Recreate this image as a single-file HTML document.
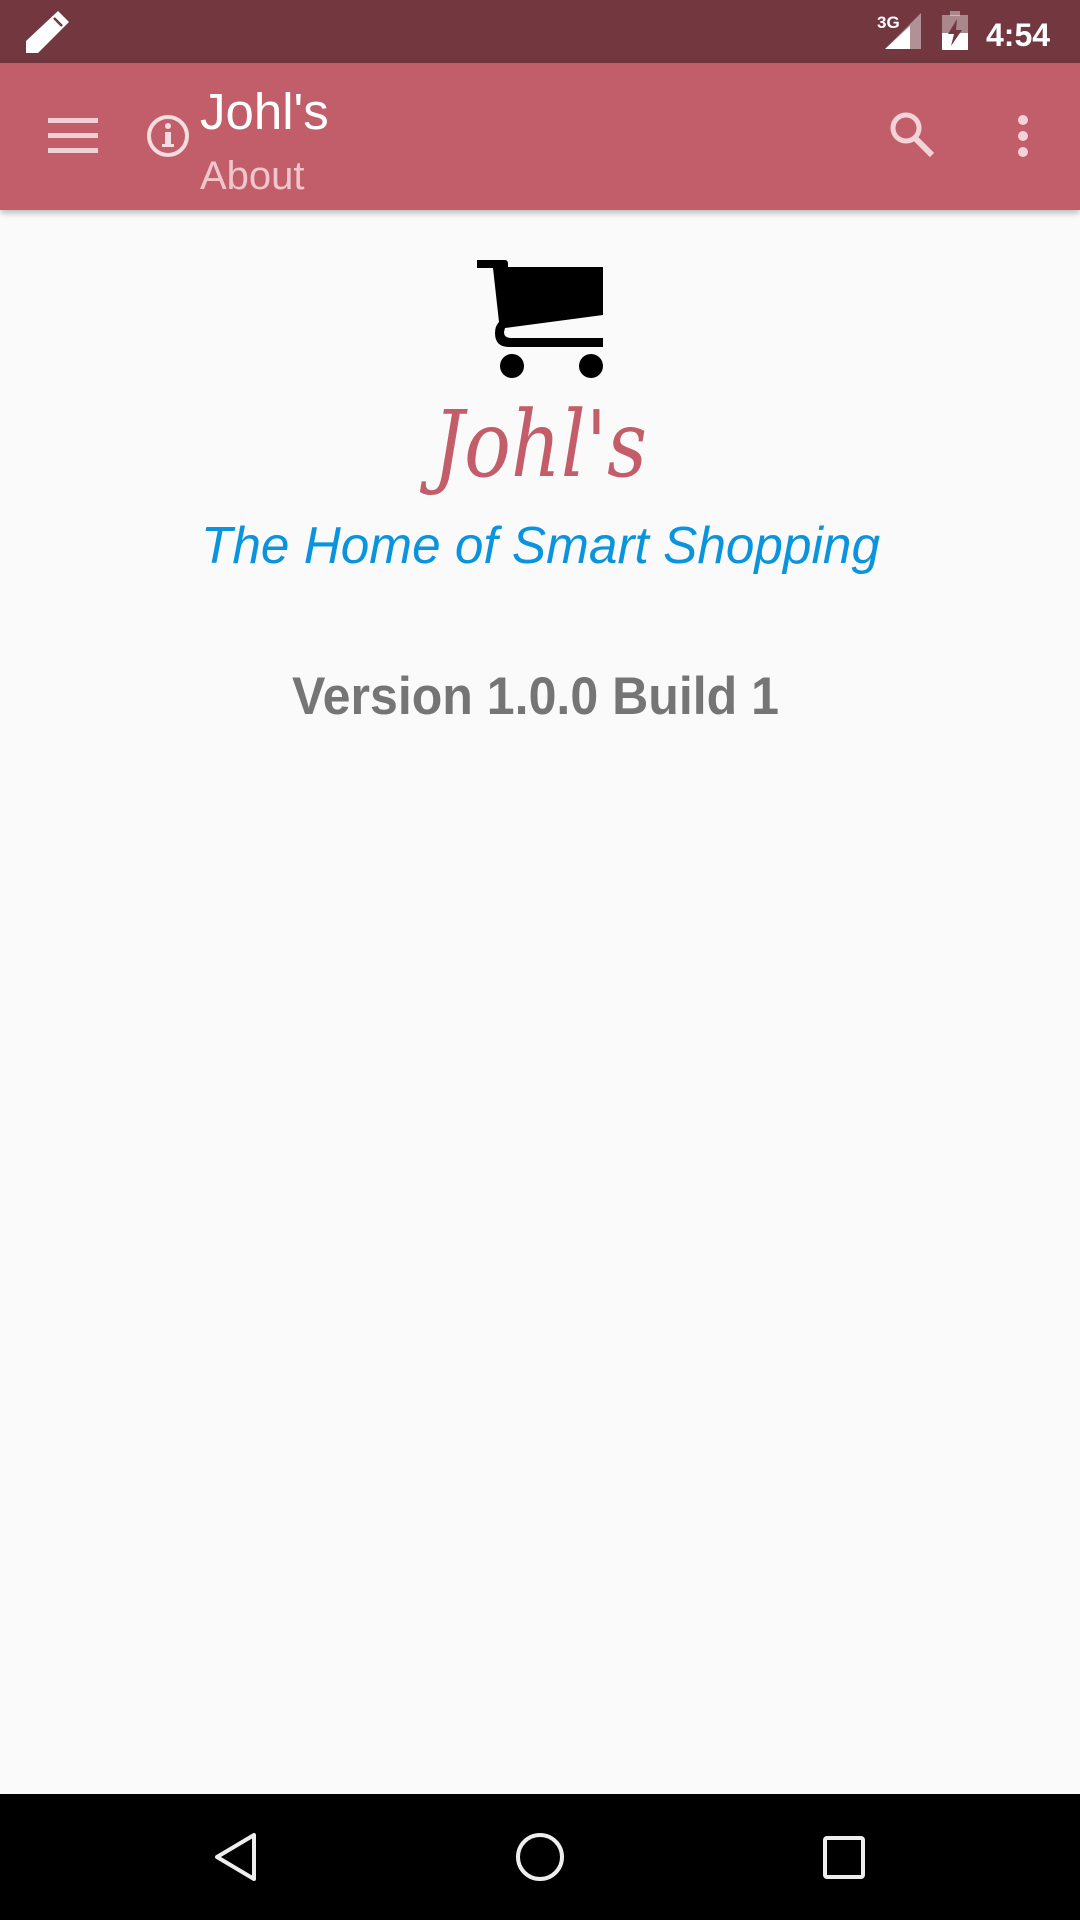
<!DOCTYPE html>
<html><head><meta charset="utf-8"><style>
html,body{margin:0;padding:0;}
body{width:1080px;height:1920px;background:#fafafa;position:relative;overflow:hidden;font-family:"Liberation Sans",sans-serif;}
.abs{position:absolute;}
</style></head><body>
<div class="abs" style="left:0;top:0;width:1080px;height:63px;background:#72373f"></div>
<div class="abs" style="left:0;top:63px;width:1080px;height:147px;background:#c15e6a;box-shadow:0 3px 6px rgba(0,0,0,0.25)"></div>
<div class="abs" style="left:0;top:1794px;width:1080px;height:126px;background:#000"></div>
<svg class="abs" style="left:0;top:0" width="1080" height="1920" viewBox="0 0 1080 1920">
  <!-- pencil -->
  <path d="M58 11 L69 22 L38 53 L26 53 L26 41 Z" fill="#fff"/>
  <path d="M54 18 L62 26" stroke="#72373f" stroke-width="2.5"/>
  <!-- 3G -->
  <text x="877" y="28" fill="#fff" font-family="Liberation Sans" font-weight="bold" font-size="17">3G</text>
  <path d="M921 13 L921 49 L885 49 Z" fill="#fff" opacity="0.45"/>
  <path d="M910 26 L910 49 L885 49 Z" fill="#fff"/>
  <!-- battery -->
  <rect x="942" y="15" width="26" height="35" fill="#fff" opacity="0.4"/>
  <rect x="950" y="11" width="10" height="5" fill="#fff" opacity="0.4"/>
  <rect x="942" y="33" width="26" height="17" fill="#fff"/>
  <path d="M957 19 L948 34 L954 34 L951 46 L962 30 L956 30 Z" fill="#72373f"/>
  <text x="986" y="46" fill="#fff" font-family="Liberation Sans" font-weight="bold" font-size="32">4:54</text>
  <!-- hamburger -->
  <g fill="#f0d0d4"><rect x="48" y="118" width="50" height="5"/><rect x="48" y="133" width="50" height="5"/><rect x="48" y="148" width="50" height="5"/></g>
  <!-- info -->
  <circle cx="168" cy="136" r="19" fill="none" stroke="#f3dde0" stroke-width="4"/>
  <circle cx="168" cy="126" r="3" fill="#f3dde0"/>
  <rect x="165" y="132" width="6" height="14" fill="#f3dde0"/>
  <rect x="162" y="144" width="12" height="3" fill="#f3dde0"/>
  <text x="200" y="129" fill="#fff" font-family="Liberation Sans" font-size="51">Johl's</text>
  <text x="200" y="189" fill="#f0c5cb" font-family="Liberation Sans" font-size="40">About</text>
  <!-- search -->
  <circle cx="906" cy="128" r="13" fill="none" stroke="#f3d3d7" stroke-width="5"/>
  <path d="M915 138 L932 155" stroke="#f3d3d7" stroke-width="6"/>
  <g fill="#f3d3d7"><circle cx="1023" cy="120" r="5"/><circle cx="1023" cy="136" r="5"/><circle cx="1023" cy="152" r="5"/></g>
  <!-- cart -->
  <path d="M477 260 L505 260 Q508 260 508 264 L508 267 L603 267 L603 315 L505 328 L504 332 Q504 338 511 338 L603 338 L603 347 L509 347 Q495 347 495 333 Q495 326 499 322 L493 268 L477 268 Z" fill="#000"/>
  <circle cx="512" cy="366" r="12" fill="#000"/>
  <circle cx="591" cy="366" r="12" fill="#000"/>
  <text x="433" y="476" fill="#c25d69" font-family="DejaVu Serif" font-style="italic" font-size="92" textLength="214" lengthAdjust="spacingAndGlyphs">Johl's</text>
  <text x="201" y="563" fill="#0a94de" font-family="Liberation Sans" font-style="italic" font-size="52" textLength="679" lengthAdjust="spacingAndGlyphs">The Home of Smart Shopping</text>
  <text x="292" y="714" fill="#757575" font-family="Liberation Sans" font-weight="bold" font-size="53" textLength="487" lengthAdjust="spacingAndGlyphs">Version 1.0.0 Build 1</text>
  <!-- nav -->
  <path d="M254 1835 L254 1879 L217 1857 Z" fill="none" stroke="#eee" stroke-width="4" stroke-linejoin="round"/>
  <circle cx="540" cy="1857" r="22" fill="none" stroke="#eee" stroke-width="4"/>
  <rect x="825" y="1838" width="38" height="39" fill="none" stroke="#eee" stroke-width="4" rx="2"/>
</svg>
</body></html>
